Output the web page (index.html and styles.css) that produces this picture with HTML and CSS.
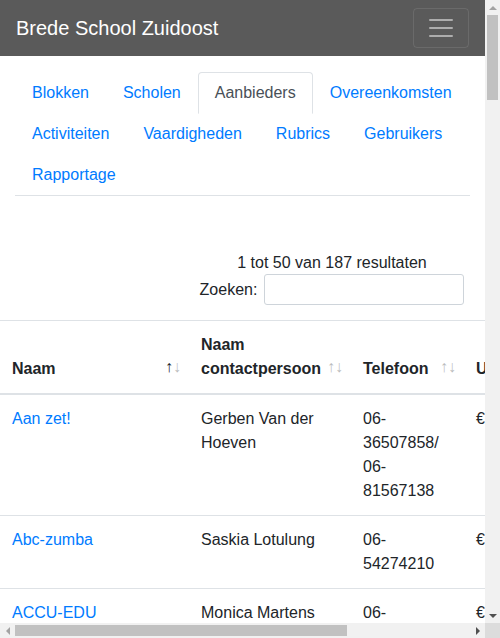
FILE: index.html
```html
<!DOCTYPE html>
<html lang="nl">
<head>
<meta charset="utf-8">
<title>Aanbieders - Brede School Zuidoost</title>
<link rel="stylesheet" href="styles.css">
</head>
<body>
<div class="viewport">
<nav class="navbar">
  <a class="brand" href="#">Brede School Zuidoost</a>
  <button class="toggler" type="button" aria-label="Menu">
    <svg class="toggler-icon" width="30" height="30" viewBox="0 0 30 30"><path stroke="rgba(255,255,255,0.5)" stroke-width="2" stroke-linecap="round" stroke-miterlimit="10" d="M4 7h22M4 15h22M4 23h22"/></svg>
  </button>
</nav>
<div class="container">
  <ul class="tabs">
    <li class="tab-item"><a class="tab" href="#">Blokken</a></li>
    <li class="tab-item"><a class="tab" href="#">Scholen</a></li>
    <li class="tab-item"><a class="tab active" href="#">Aanbieders</a></li>
    <li class="tab-item"><a class="tab" href="#">Overeenkomsten</a></li>
    <li class="tab-item"><a class="tab" href="#">Activiteiten</a></li>
    <li class="tab-item"><a class="tab" href="#">Vaardigheden</a></li>
    <li class="tab-item"><a class="tab" href="#">Rubrics</a></li>
    <li class="tab-item"><a class="tab" href="#">Gebruikers</a></li>
    <li class="tab-item"><a class="tab" href="#">Rapportage</a></li>
  </ul>
</div>
<div class="dt-wrapper">
  <div class="dt-info">1 tot 50 van 187 resultaten</div>
  <div class="dt-filter"><label class="dt-label">Zoeken:<input class="dt-search" type="search"></label></div>
  <table class="dt">
    <colgroup>
      <col class="c-naam"><col class="c-contact"><col class="c-tel"><col class="c-tarief">
    </colgroup>
    <thead>
      <tr>
        <th class="sorting sorting-asc">Naam</th>
        <th class="sorting">Naam contactpersoon</th>
        <th class="sorting">Telefoon</th>
        <th class="sorting">Uurtarief</th>
      </tr>
    </thead>
    <tbody>
      <tr><td><a href="#">Aan zet!</a></td><td>Gerben Van der Hoeven</td><td>06-36507858/ 06-81567138</td><td>€ 45,00</td></tr>
      <tr><td><a href="#">Abc-zumba</a></td><td>Saskia Lotulung</td><td>06-54274210</td><td>€ 35,00</td></tr>
      <tr><td><a href="#">ACCU-EDU</a></td><td>Monica Martens</td><td>06-24817563</td><td>€ 50,00</td></tr>
      <tr><td><a href="#">Afrikaanse Dans Academie</a></td><td>Kofi Mensah</td><td>06-41872293</td><td>€ 40,00</td></tr>
      <tr><td><a href="#">Amsterdam Dance Center</a></td><td>Naomi Kwakye</td><td>020-6972310</td><td>€ 42,50</td></tr>
      <tr><td><a href="#">Amsterdamse Kinderkunstschool</a></td><td>Petra de Vries</td><td>06-19283746</td><td>€ 45,00</td></tr>
      <tr><td><a href="#">Art-Feel</a></td><td>Remco Jansen</td><td>06-28374651</td><td>€ 37,50</td></tr>
      <tr><td><a href="#">Atelier Zuidoost</a></td><td>Linda Bakker</td><td>06-55463728</td><td>€ 40,00</td></tr>
      <tr><td><a href="#">Badminton Club Zuidoost</a></td><td>Kevin Doelwijt</td><td>06-73829104</td><td>€ 30,00</td></tr>
      <tr><td><a href="#">Balletschool Dance4All</a></td><td>Marieke Smit</td><td>06-92837465</td><td>€ 45,00</td></tr>
      <tr><td><a href="#">Basketbal Vereniging Bijlmer</a></td><td>Ahmed El Amrani</td><td>06-11223344</td><td>€ 35,00</td></tr>
      <tr><td><a href="#">Beeldend Lab</a></td><td>Sandra Pinas</td><td>06-38475610</td><td>€ 50,00</td></tr>
      <tr><td><a href="#">Bibliotheek Zuidoost</a></td><td>Esther Koster</td><td>020-6971940</td><td>€ 0,00</td></tr>
      <tr><td><a href="#">Bijlmer Sportief</a></td><td>Romano Sedney</td><td>06-47382910</td><td>€ 32,50</td></tr>
      <tr><td><a href="#">Boks Academie Zuidoost</a></td><td>Dennis Brouwer</td><td>06-29384756</td><td>€ 40,00</td></tr>
      <tr><td><a href="#">Bouw je Toekomst</a></td><td>Hans Visser</td><td>06-64738291</td><td>€ 55,00</td></tr>
      <tr><td><a href="#">Brasa Capoeira</a></td><td>Thiago Silva</td><td>06-18273645</td><td>€ 35,00</td></tr>
      <tr><td><a href="#">Bricks4Kidz</a></td><td>Jeroen de Boer</td><td>06-83746152</td><td>€ 47,50</td></tr>
      <tr><td><a href="#">Circus Elleboog</a></td><td>Anouk Meijer</td><td>020-6269370</td><td>€ 50,00</td></tr>
      <tr><td><a href="#">CoderDojo Zuidoost</a></td><td>Youssef Bakri</td><td>06-57483920</td><td>€ 0,00</td></tr>
      <tr><td><a href="#">Creatief Lab</a></td><td>Ingrid Wolters</td><td>06-36475829</td><td>€ 42,50</td></tr>
      <tr><td><a href="#">Cultuurhuis Zuidoost</a></td><td>Germaine Pinas</td><td>020-3145670</td><td>€ 40,00</td></tr>
      <tr><td><a href="#">Dansschool Rhythm</a></td><td>Sharon Tjin</td><td>06-49586712</td><td>€ 37,50</td></tr>
      <tr><td><a href="#">De Kleine Kok</a></td><td>Bas van Dijk</td><td>06-21436587</td><td>€ 45,00</td></tr>
      <tr><td><a href="#">De Muziekfabriek</a></td><td>Rutger Hendriks</td><td>06-78695041</td><td>€ 52,50</td></tr>
      <tr><td><a href="#">De Schaakschool</a></td><td>Willem de Groot</td><td>06-10293847</td><td>€ 35,00</td></tr>
      <tr><td><a href="#">De Tekenschool</a></td><td>Fleur Mulder</td><td>06-56473829</td><td>€ 40,00</td></tr>
      <tr><td><a href="#">Digitaal Doen</a></td><td>Mark Peters</td><td>06-91827364</td><td>€ 45,00</td></tr>
      <tr><td><a href="#">Drama Academie</a></td><td>Chantal Rozenblad</td><td>06-34251687</td><td>€ 42,50</td></tr>
      <tr><td><a href="#">Drumles Zuidoost</a></td><td>Errol Kortram</td><td>06-67584930</td><td>€ 37,50</td></tr>
      <tr><td><a href="#">Easy Swim</a></td><td>Karin Vos</td><td>06-12384756</td><td>€ 30,00</td></tr>
      <tr><td><a href="#">Ecoteam Zuidoost</a></td><td>Tim Verbeek</td><td>06-98761234</td><td>€ 35,00</td></tr>
      <tr><td><a href="#">Euforia</a></td><td>Nadia Hassan</td><td>06-45612378</td><td>€ 40,00</td></tr>
      <tr><td><a href="#">Fit4Kids</a></td><td>Patrick Dekker</td><td>06-32165498</td><td>€ 32,50</td></tr>
      <tr><td><a href="#">Flexi Sport</a></td><td>Mila de Wit</td><td>06-74185296</td><td>€ 35,00</td></tr>
      <tr><td><a href="#">Fotografie Atelier</a></td><td>Joost Kramer</td><td>06-85274196</td><td>€ 47,50</td></tr>
      <tr><td><a href="#">Free Runners</a></td><td>Glenn Biswane</td><td>06-96385274</td><td>€ 35,00</td></tr>
      <tr><td><a href="#">Freestyle Voetbal</a></td><td>Mitchell Zeefuik</td><td>06-14725836</td><td>€ 37,50</td></tr>
      <tr><td><a href="#">Futsal Zuidoost</a></td><td>Rachid Amrani</td><td>06-25836914</td><td>€ 30,00</td></tr>
      <tr><td><a href="#">Gamelab</a></td><td>Daan Schouten</td><td>06-36914725</td><td>€ 45,00</td></tr>
      <tr><td><a href="#">Ganzenpoort</a></td><td>Els Timmermans</td><td>020-6990022</td><td>€ 40,00</td></tr>
      <tr><td><a href="#">Gezond Koken</a></td><td>Priya Ramsaran</td><td>06-47025813</td><td>€ 42,50</td></tr>
      <tr><td><a href="#">Girls Rock</a></td><td>Lisa Vermeulen</td><td>06-58136924</td><td>€ 40,00</td></tr>
      <tr><td><a href="#">Gitaarles Zuidoost</a></td><td>Ruben Kok</td><td>06-69247035</td><td>€ 37,50</td></tr>
      <tr><td><a href="#">Goed Gebekt</a></td><td>Annemieke Post</td><td>06-70358146</td><td>€ 45,00</td></tr>
      <tr><td><a href="#">Golfclub De Hoge Dijk</a></td><td>Frank Willems</td><td>020-6961234</td><td>€ 50,00</td></tr>
      <tr><td><a href="#">Groene Vingers</a></td><td>Sophie Jacobs</td><td>06-81469257</td><td>€ 32,50</td></tr>
      <tr><td><a href="#">Gymnastiek Vereniging Zuidoost</a></td><td>Marco Hoekstra</td><td>06-92570368</td><td>€ 30,00</td></tr>
      <tr><td><a href="#">Handbal Zuidoost</a></td><td>Jasper Bos</td><td>06-13579246</td><td>€ 30,00</td></tr>
      <tr><td><a href="#">Hiphop Huis</a></td><td>Shirley Wijngaarde</td><td>06-24680135</td><td>€ 40,00</td></tr>
    </tbody>
  </table>
  <ul class="pagination">
    <li class="page-item disabled"><span class="page-link">Vorige</span></li>
    <li class="page-item current"><span class="page-link">1</span></li>
    <li class="page-item"><a class="page-link" href="#">2</a></li>
    <li class="page-item"><a class="page-link" href="#">3</a></li>
    <li class="page-item"><a class="page-link" href="#">4</a></li>
    <li class="page-item"><a class="page-link" href="#">Volgende</a></li>
  </ul>
</div>
</div>
<div class="vbar" aria-hidden="true">
  <div class="sb-btn"><span class="tri tri-up"></span></div>
  <div class="vtrack"><div class="vthumb"></div></div>
  <div class="sb-btn"><span class="tri tri-down"></span></div>
</div>
<div class="hbar" aria-hidden="true">
  <div class="sb-btn"><span class="tri tri-left"></span></div>
  <div class="htrack"><div class="hthumb"></div></div>
  <div class="sb-btn"><span class="tri tri-right"></span></div>
</div>
<div class="corner" aria-hidden="true"></div>
</body>
</html>
```
FILE: styles.css
```css
* { box-sizing: border-box; }

html, body {
  height: 100%;
  overflow: hidden;
}

body {
  margin: 0;
  display: grid;
  grid-template-columns: minmax(0, 1fr) 15px;
  grid-template-rows: minmax(0, 1fr) 15px;
  font-family: "Liberation Sans", Arial, sans-serif;
  font-size: 16px;
  line-height: 1.5;
  color: #212529;
  background: #fff;
}

.viewport {
  overflow: hidden;
  min-width: 0;
  min-height: 0;
}

a { color: #007bff; text-decoration: none; }

/* ---------- navbar ---------- */
.navbar {
  display: flex;
  align-items: center;
  justify-content: space-between;
  padding: 8px 16px;
  background: #5a5a5a;
}

.brand {
  color: #fff;
  font-size: 20px;
  line-height: 30px;
  padding: 5px 0;
}

.toggler {
  display: flex;
  align-items: center;
  justify-content: center;
  width: 56px;
  height: 40px;
  padding: 4px 12px;
  background: transparent;
  border: 1px solid rgba(255, 255, 255, 0.1);
  border-radius: 4px;
}

.toggler-icon { display: block; }

/* ---------- tabs ---------- */
.container {
  padding: 0 15px;
  margin-top: 16px;
}

.tabs {
  display: flex;
  flex-wrap: wrap;
  list-style: none;
  margin: 0;
  padding: 0;
  border-bottom: 1px solid #dee2e6;
}

.tab-item { margin-bottom: -1px; }

.tab {
  display: block;
  padding: 8px 16px;
  border: 1px solid transparent;
  border-radius: 4px 4px 0 0;
  color: #007bff;
}

.tab.active {
  color: #495057;
  background: #fff;
  border-color: #dee2e6 #dee2e6 #fff;
}

/* ---------- datatable ---------- */
.dt-wrapper {
  width: 664px;
  margin-top: 55px;
}

.dt-info { text-align: center; }

.dt-filter {
  display: flex;
  justify-content: center;
  margin-top: -1px;
}

.dt-label {
  display: flex;
  align-items: center;
  gap: 7px;
}

.dt-search {
  width: 200px;
  height: 31px;
  padding: 4px 8px;
  font-size: 14px;
  border: 1px solid #ced4da;
  border-radius: 3px;
  font-family: inherit;
}

.dt {
  width: 100%;
  table-layout: fixed;
  border-collapse: collapse;
  margin-top: 15px;
}

.c-naam { width: 189px; }
.c-contact { width: 162px; }
.c-tel { width: 113px; }
.c-tarief { width: 200px; }

.dt th,
.dt td {
  padding: 12px;
  border-top: 1px solid #dee2e6;
  text-align: left;
}

.dt th {
  position: relative;
  vertical-align: bottom;
  border-bottom: 2px solid #dee2e6;
  font-weight: bold;
  padding-right: 30px;
}

.dt td { vertical-align: top; }

.sorting::before,
.sorting::after {
  position: absolute;
  bottom: 0.9em;
  display: block;
  opacity: 0.3;
  font-weight: normal;
}

.sorting::before { right: 1em; content: "\2191"; }
.sorting::after { right: 0.5em; content: "\2193"; }
.sorting-asc::before { opacity: 1; }

.pagination {
  display: flex;
  justify-content: center;
  list-style: none;
  padding: 0;
  margin: 8px 0 16px;
}

.page-link {
  display: block;
  padding: 6px 12px;
  margin-left: -1px;
  border: 1px solid #dee2e6;
  color: #007bff;
  background: #fff;
}

.page-item:first-child .page-link { border-radius: 4px 0 0 4px; margin-left: 0; }
.page-item:last-child .page-link { border-radius: 0 4px 4px 0; }
.page-item.current .page-link { background: #007bff; border-color: #007bff; color: #fff; }
.page-item.disabled .page-link { color: #6c757d; }

/* ---------- browser scrollbars ---------- */
.vbar {
  display: flex;
  flex-direction: column;
  background: #f1f1f1;
}

.hbar {
  display: flex;
  background: #f1f1f1;
}

.sb-btn {
  flex: none;
  width: 15px;
  height: 15px;
  display: flex;
  align-items: center;
  justify-content: center;
}

.vtrack {
  flex: 1;
  padding: 0 2px;
}

.vthumb {
  height: 85px;
  background: #c1c1c1;
}

.htrack {
  flex: 1;
  padding: 2px 0;
}

.hthumb {
  width: 332px;
  height: 11px;
  background: #c1c1c1;
}

.corner { background: #dcdcdc; }

.tri {
  width: 0;
  height: 0;
  display: block;
}

.tri-up {
  border-left: 4px solid transparent;
  border-right: 4px solid transparent;
  border-bottom: 4px solid #a3a3a3;
}

.tri-down {
  border-left: 4px solid transparent;
  border-right: 4px solid transparent;
  border-top: 4px solid #505050;
}

.tri-left {
  border-top: 4px solid transparent;
  border-bottom: 4px solid transparent;
  border-right: 4px solid #a3a3a3;
}

.tri-right {
  border-top: 4px solid transparent;
  border-bottom: 4px solid transparent;
  border-left: 4px solid #505050;
}
```
